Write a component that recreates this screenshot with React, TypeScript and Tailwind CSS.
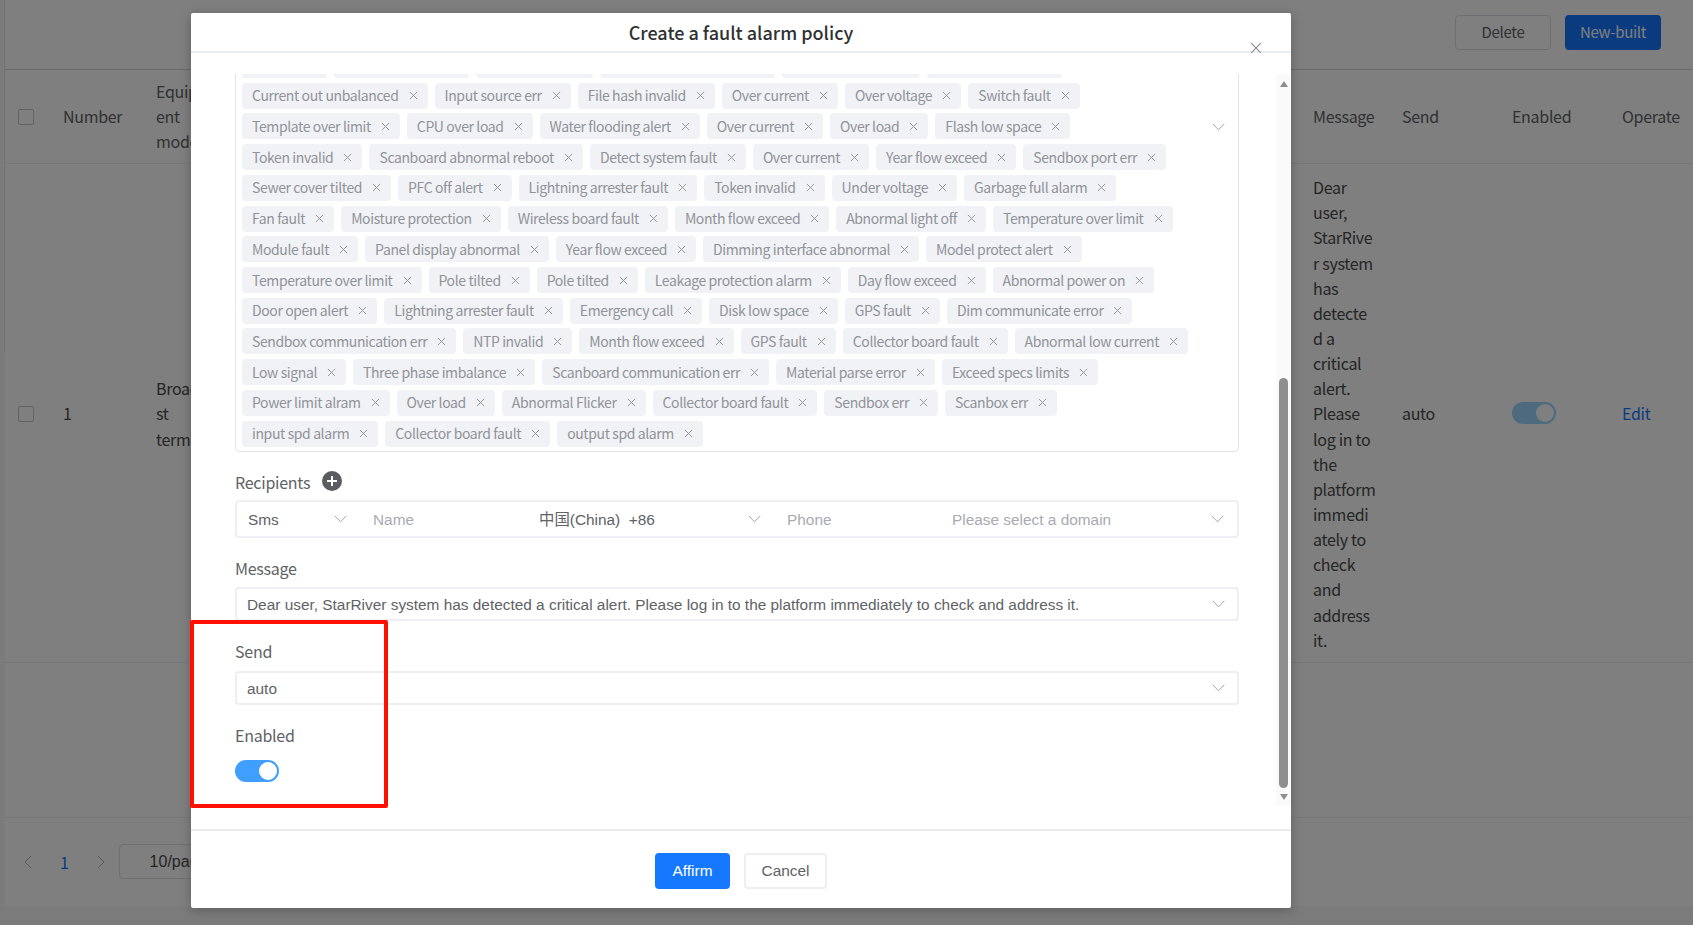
const tagRows = [
  ["Current out unbalanced", "Input source err", "File hash invalid", "Over current", "Over voltage", "Switch fault"],
  ["Template over limit", "CPU over load", "Water flooding alert", "Over current", "Over load", "Flash low space"],
  ["Token invalid", "Scanboard abnormal reboot", "Detect system fault", "Over current", "Year flow exceed", "Sendbox port err"],
  ["Sewer cover tilted", "PFC off alert", "Lightning arrester fault", "Token invalid", "Under voltage", "Garbage full alarm"],
  ["Fan fault", "Moisture protection", "Wireless board fault", "Month flow exceed", "Abnormal light off", "Temperature over limit"],
  ["Module fault", "Panel display abnormal", "Year flow exceed", "Dimming interface abnormal", "Model protect alert"],
  ["Temperature over limit", "Pole tilted", "Pole tilted", "Leakage protection alarm", "Day flow exceed", "Abnormal power on"],
  ["Door open alert", "Lightning arrester fault", "Emergency call", "Disk low space", "GPS fault", "Dim communicate error"],
  ["Sendbox communication err", "NTP invalid", "Month flow exceed", "GPS fault", "Collector board fault", "Abnormal low current"],
  ["Low signal", "Three phase imbalance", "Scanboard communication err", "Material parse error", "Exceed specs limits"],
  ["Power limit alram", "Over load", "Abnormal Flicker", "Collector board fault", "Sendbox err", "Scanbox err"],
  ["input spd alarm", "Collector board fault", "output spd alarm"],
]

const message =
  "Dear user, StarRiver system has detected a critical alert. Please log in to the platform immediately to check and address it."

// the narrow table column breaks words at these points
const messageLines = [
  "Dear", "user,", "StarRive", "r system", "has", "detecte", "d a", "critical", "alert.", "Please",
  "log in to", "the", "platform", "immedi", "ately to", "check", "and", "address", "it.",
]

const Chevron = ({ className = "" }: { className?: string }) => (
  <svg className={`w-[13px] h-[8px] shrink-0 text-[#a3a6ad] ${className}`} viewBox="0 0 13 8" fill="none" stroke="currentColor" strokeWidth="1">
    <path d="M0.7 0.8 L6.5 6.8 L12.3 0.8" />
  </svg>
)

const Cross = ({ className = "" }: { className?: string }) => (
  <svg className={className} viewBox="0 0 10 10" fill="none" stroke="currentColor" strokeWidth="1">
    <path d="M1 1 L9 9 M9 1 L1 9" />
  </svg>
)

const Tag = ({ label }: { label: string }) => (
  <div className="h-[26px] flex items-center pl-[10px] pr-[10px] bg-[#f1f2f6] rounded-[4px] text-[14px] tracking-[-0.39px] text-[#909399] whitespace-nowrap">
    {label}
    <Cross className="w-[9px] h-[9px] ml-[10px] text-[#8d9095]" />
  </div>
)

const Label = ({ children }: { children: React.ReactNode }) => (
  <div className="h-[25px] leading-[24px] text-[16px] tracking-[-0.25px] text-[#606266]">{children}</div>
)

const SelectBox = ({ text }: { text: string }) => (
  <div className="h-[34px] flex items-center justify-between pl-[10px] pr-[12px] pt-[1px] border-2 border-[#eeeef4] rounded-[4px] font-['Liberation_Sans'] text-[15.4px] text-[#606266]">
    <span>{text}</span>
    <Chevron />
  </div>
)

const Checkbox = () => <div className="w-[16px] h-[16px] border border-[#c4c4c4] rounded-[2px] bg-white" />

const App = () => {
  return (
    <div className="relative h-screen w-full overflow-hidden bg-white font-['Noto_Sans_CJK_SC',sans-serif]">
      {/* page behind the dialog */}
      <div className="h-[925px] flex flex-col pl-[5px] bg-[#f6f6f6] text-[16px] tracking-[-0.3px] text-[#606266]">
        <div className="h-[70px] shrink-0 bg-white border-b border-[#d6d6d6] flex items-start justify-end gap-[14px] pt-[15px] pr-[32px]">
          <div className="w-[96px] h-[35px] flex items-center justify-center border border-[#dcdfe6] rounded-[4px] text-[15px]">Delete</div>
          <div className="w-[96px] h-[35px] flex items-center justify-center bg-[#1677ff] rounded-[4px] text-[15px] text-white">New-built</div>
        </div>

        <div className="h-[94px] shrink-0 bg-white flex items-center border-b border-[#ebeef5] leading-[25px]">
          <div className="w-[58px] pl-[13px]"><Checkbox /></div>
          <div className="w-[93px]">Number</div>
          <div className="w-[64px]">Equipm<br />ent<br />model</div>
          <div className="w-[1093px]" />
          <div className="w-[89px]">Message</div>
          <div className="w-[110px]">Send</div>
          <div className="w-[110px]">Enabled</div>
          <div>Operate</div>
        </div>

        <div className="h-[499px] shrink-0 bg-white pt-[2px] flex items-center border-b border-[#ebeef5] leading-[25.14px] text-[#4a4a4a]">
          <div className="w-[58px] pl-[13px]"><Checkbox /></div>
          <div className="w-[93px]">1</div>
          <div className="w-[64px]">Broadca<br />st<br />terminal</div>
          <div className="w-[1093px]" />
          <div className="w-[89px]">
            {messageLines.map((line, i) => (
              <div className="whitespace-nowrap" key={i}>{line}</div>
            ))}
          </div>
          <div className="w-[110px]">auto</div>
          <div className="w-[110px]">
            <div className="w-[44px] h-[22px] -mt-[2px] rounded-full bg-[#9ad4ff] flex items-center justify-end pr-[2px]">
              <div className="w-[18px] h-[18px] rounded-full bg-white" />
            </div>
          </div>
          <div className="text-[#1677ff]">Edit</div>
        </div>

        <div className="h-[154px] shrink-0 bg-white" />

        <div className="h-[89px] shrink-0 bg-white border-t border-[#f0f0f0] flex items-center pl-[18px] pb-[1px]">
          <svg className="w-[10px] h-[14px] text-[#b5b5b5]" viewBox="0 0 10 14" fill="none" stroke="currentColor"><path d="M8 1 L2 7 L8 13" /></svg>
          <span className="ml-[27px] text-[#1677ff]">1</span>
          <svg className="ml-[27px] w-[10px] h-[14px] text-[#b5b5b5]" viewBox="0 0 10 14" fill="none" stroke="currentColor"><path d="M2 1 L8 7 L2 13" /></svg>
          <div className="ml-[13px] w-[200px] h-[35px] flex items-center pl-[30px] border border-[#dcdfe6] rounded-[4px] font-['Liberation_Sans'] tracking-normal text-[#4a4a4a]">10/page</div>
        </div>
      </div>

      {/* mask */}
      <div className="absolute left-0 right-0 top-0 h-[925px] bg-black/50" />
      <div className="absolute left-[4px] top-0 h-[352px] w-px bg-[#747474]" />

      {/* dialog */}
      <div className="absolute left-[191px] top-[13px] w-[1100px] h-[895px] flex flex-col bg-white rounded-[2px] shadow-[0_2px_12px_rgba(0,0,0,0.25)]">
        <div className="h-[40px] shrink-0 border-b-2 border-[#e9edf2] flex items-center justify-center text-[18px] font-medium text-[#303133]">
          Create a fault alarm policy
        </div>
        <Cross className="absolute right-[29px] top-[29px] w-[12px] h-[12px] text-[#8a8d92]" />

        <div className="mt-[21px] h-[731px] shrink-0 flex overflow-hidden">
          <div className="flex-1 min-w-0 pl-[44px] pr-[37px]">
            <div className="-mt-[27px] border border-[#e1e3ea] rounded-[4px] pl-[6px] pt-[4px] pb-[4px] flex flex-col gap-y-[4.72px]">
              <div className="flex gap-[7px]">
                <div className="w-[85px] h-[26px] bg-[#f1f2f6] rounded-[4px]" />
                <div className="w-[135px] h-[26px] bg-[#f1f2f6] rounded-[4px]" />
                <div className="w-[117px] h-[26px] bg-[#f1f2f6] rounded-[4px]" />
                <div className="w-[175px] h-[26px] bg-[#f1f2f6] rounded-[4px]" />
                <div className="w-[138px] h-[26px] bg-[#f1f2f6] rounded-[4px]" />
                <div className="w-[135px] h-[26px] bg-[#f1f2f6] rounded-[4px]" />
              </div>
              {tagRows.map((row, i) => (
                <div className="flex gap-[7px] relative" key={i}>
                  {row.map((t, j) => (
                    <Tag label={t} key={j} />
                  ))}
                  {i === 1 && <Chevron className="absolute left-[970px] top-[10px]" />}
                </div>
              ))}
            </div>

            <div className="mt-[18px] flex items-center gap-[12px]">
              <Label>Recipients</Label>
              <div className="w-[20px] h-[20px] -mt-[3px] rounded-full bg-[#5a5c61] flex items-center justify-center">
                <svg className="w-[12px] h-[12px]" viewBox="0 0 12 12" stroke="white" strokeWidth="2"><path d="M6 1 V11 M1 6 H11" /></svg>
              </div>
            </div>
            <div className="mt-[5px] h-[38px] flex items-center pt-[1px] border-2 border-[#eeeef4] rounded-[4px] font-['Liberation_Sans'] text-[15.4px]">
              <div className="w-[127px] flex items-center justify-between pl-[11px] pr-[17px] text-[#606266]">
                <span>Sms</span>
                <Chevron />
              </div>
              <div className="w-[161px] pl-[9px] text-[#a8abb2]">Name</div>
              <div className="w-[252px] flex items-center justify-between pl-[14px] pr-[16px] text-[#606266]">
                <span className="font-['Liberation_Sans','Noto_Sans_CJK_SC',sans-serif]">中国(China)&nbsp;&nbsp;+86</span>
                <Chevron />
              </div>
              <div className="w-[175px] pl-[10px] text-[#a8abb2]">Phone</div>
              <div className="flex-1 flex items-center justify-between pl-[0px] pr-[13px] text-[#a8abb2]">
                <span>Please select a domain</span>
                <Chevron />
              </div>
            </div>

            <div className="mt-[18px]"><Label>Message</Label></div>
            <div className="mt-[6px]"><SelectBox text={message} /></div>

            <div className="mt-[18px]"><Label>Send</Label></div>
            <div className="mt-[7px]"><SelectBox text="auto" /></div>

            <div className="mt-[18px]"><Label>Enabled</Label></div>
            <div className="mt-[12px] w-[44px] h-[22px] rounded-full bg-[#409eff] flex items-center justify-end pr-[2px]">
              <div className="w-[18px] h-[18px] rounded-full bg-white" />
            </div>
          </div>

          <div className="w-[15px] shrink-0 bg-[#fafafa] flex flex-col items-center">
            <div className="mt-[7px] w-0 h-0 border-x-[4px] border-x-transparent border-b-[6px] border-b-[#8e8e8e]" />
            <div className="mt-[291px] w-[9px] h-[410px] rounded-full bg-[#8e8e8e]" />
            <div className="mt-[6px] w-0 h-0 border-x-[4px] border-x-transparent border-t-[6px] border-t-[#8e8e8e]" />
          </div>
        </div>

        <div className="mt-[24px] flex-1 border-t-2 border-[#e9edf2] flex items-start justify-center gap-[14px] pt-[22px] font-['Liberation_Sans'] text-[15.4px]">
          <div className="w-[75px] h-[36px] flex items-center justify-center rounded-[4px] bg-[#1677ff] text-white">Affirm</div>
          <div className="w-[83px] h-[36px] flex items-center justify-center rounded-[4px] border-2 border-[#eeeef4] text-[#606266]">Cancel</div>
        </div>
      </div>

      {/* annotation */}
      <div className="absolute left-[190px] top-[620px] w-[198px] h-[188px] border-4 border-[#ff1000] rounded-[2px]" />
    </div>
  )
}

export default App
